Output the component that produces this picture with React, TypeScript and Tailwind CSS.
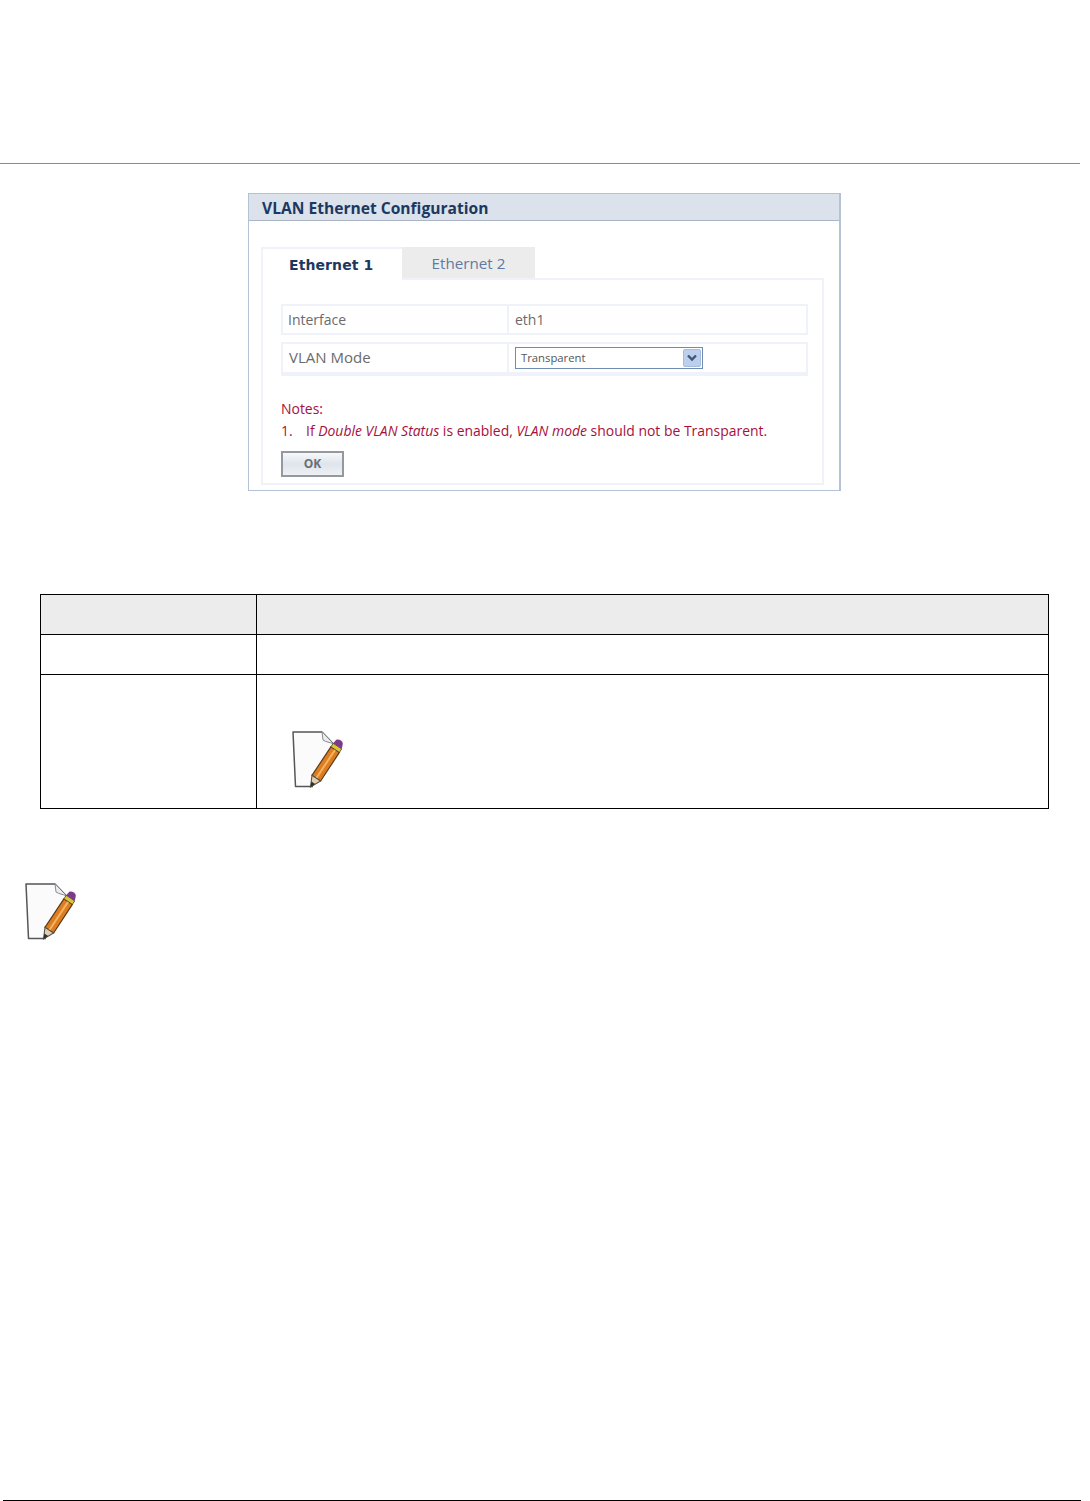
const uiFont = "font-['Open_Sans','Noto_Sans',sans-serif]";

function NoteIcon({ className }: { className: string }) {
  return (
    <svg className={className} width="54" height="60" viewBox="0 0 54 60">
      {/* page, left open on the right where the pencil crosses it */}
      <path d="M22 56.5H4.5L2 2H31L42 13.5V28" fill="#fbfbfc" stroke="#55565a" strokeWidth="1.5" strokeLinejoin="round" />
      <path d="M31 2L32 10C35 12 39 12.5 42 13.5" fill="#ececee" stroke="#8c8c90" strokeWidth="1" />
      {/* pencil */}
      <g transform="translate(-1.5 0)">
        <path d="M22.5 45.4L41.4 16.8L49.9 22.4L31.1 51Z" fill="#dd7d22" stroke="#5a3a1a" strokeWidth="1.2" />
        <path d="M26.8 48.2L45.7 19.6" stroke="#f6b25e" strokeWidth="2" />
        <path d="M41.4 16.8L43.7 13.3L52.2 18.9L49.9 22.4Z" fill="#d6c83a" stroke="#5a3a1a" strokeWidth="0.8" />
        <path d="M43.7 13.3L46.8 9.8C48 9 50 9.5 51.5 10.6C53 11.7 53.6 13.4 53.2 14.6L52.2 18.9Z" fill="#7c3a8c" />
        <path d="M21 57L22.5 45.4L31.1 51Z" fill="#dfcfb2" stroke="#5a5242" strokeWidth="1.1" />
        <path d="M21 57L21.9 51.6L25.6 54Z" fill="#2e2e2e" />
      </g>
    </svg>
  );
}

function VlanPanel() {
  return (
    <div className={`w-[593px] h-[298px] mx-auto border border-[#b5c2d5] border-r-2 ${uiFont}`}>
      <div className="h-[27px] bg-[#dbe2ec] border-b border-[#aab5c6] pl-[13px] text-[15.6px] font-bold leading-[29px] text-[#1c3860]">
        VLAN Ethernet Configuration
      </div>
      <div className="pl-3 pr-[15px] pt-[26px]">
        <div className="flex h-[33px]">
          <div className="w-[141px] border-l-2 border-t-2 border-[#eff3f9] bg-white pl-[26px] pt-[6px] text-[14px] font-bold tracking-[0.1px] font-['DejaVu_Sans',sans-serif] text-[#1c3860]">
            Ethernet 1
          </div>
          <div className="w-[133px] bg-[#ececec] border-b-2 border-[#eff3f9] text-center pt-[5px] text-[15.2px] text-[#5f7ba3]">
            Ethernet 2
          </div>
          <div className="flex-1 border-b-2 border-[#eff3f9]" />
        </div>
        <div className="h-[205px] border-x-2 border-b-2 border-[#eff3f9] pl-[18px] pr-[14px] pt-[24px]">
          <div className="flex h-[31px] border-2 border-[#eff3f9] text-[14px] text-[#6b6b6b]">
            <div className="w-[226px] border-r-2 border-[#eff3f9] pl-[5px] leading-[28px]">Interface</div>
            <div className="pl-[6px] leading-[28px]">eth1</div>
          </div>
          <div className="flex h-[34px] mt-[7px] border-2 border-b-4 border-[#eff3f9] text-[15px] text-[#6b6b6b]">
            <div className="w-[226px] border-r-2 border-[#eff3f9] pl-[6px] leading-[27px]">VLAN Mode</div>
            <div className="pl-[6px] pt-[3px]">
              <div className="flex items-center justify-between w-[188px] h-[22px] border border-[#6f8bb0] pl-[5px] pr-px text-[11.3px] text-[#555]">
                <span className="pt-px">Transparent</span>
                <span className="flex items-center justify-center w-[18px] h-[18px] rounded-[2px] bg-[#bcd0ee] border border-[#a5bce0]">
                  <svg width="12" height="8" viewBox="0 0 12 8">
                    <path d="M2 1.5L6 5.5L10 1.5" fill="none" stroke="#3f5678" strokeWidth="2.4" />
                  </svg>
                </span>
              </div>
            </div>
          </div>
          <div className="mt-[23px] text-[13.95px] leading-[20px] text-[#a80f3c]">Notes:</div>
          <div className="flex mt-px text-[13.95px] leading-[21px] text-[#a80f3c]">
            <span className="w-[25px]">1.</span>
            <span>
              If <em>Double VLAN Status</em> is enabled, <em>VLAN mode</em> should not be Transparent.
            </span>
          </div>
          <div className="flex items-center justify-center w-[63px] h-[26px] mt-[10px] border-2 border-[#94999f] bg-gradient-to-b from-[#f7f8fa] via-[#dfe5ec] to-[#eef1f5] text-[12px] font-bold text-[#6a6f76]">
            OK
          </div>
        </div>
      </div>
    </div>
  );
}

function DocTable() {
  return (
    <div className="ml-10 w-[1009px] border border-black">
      <div className="flex h-[40px] bg-[#ececec] border-b border-black">
        <div className="w-[216px] border-r border-black" />
      </div>
      <div className="flex h-[40px] border-b border-black">
        <div className="w-[216px] border-r border-black" />
      </div>
      <div className="flex h-[133px]">
        <div className="w-[216px] border-r border-black" />
        <div className="pl-[34px] pt-[55px]">
          <NoteIcon className="block" />
        </div>
      </div>
    </div>
  );
}

export default function App() {
  return (
    <div className="relative h-[1501px] w-[1090px] overflow-hidden bg-white">
      <div className="h-[164px] w-[1080px] border-b border-[#8a8a8a]" />
      <div className="w-[1089px] pt-[29px]">
        <VlanPanel />
      </div>
      <div className="pt-[103px]">
        <DocTable />
      </div>
      <div className="pl-[24px] pt-[73px]">
        <NoteIcon className="block" />
      </div>
      <div className="absolute bottom-0 left-[3px] h-px w-[1078px] bg-black" />
    </div>
  );
}
